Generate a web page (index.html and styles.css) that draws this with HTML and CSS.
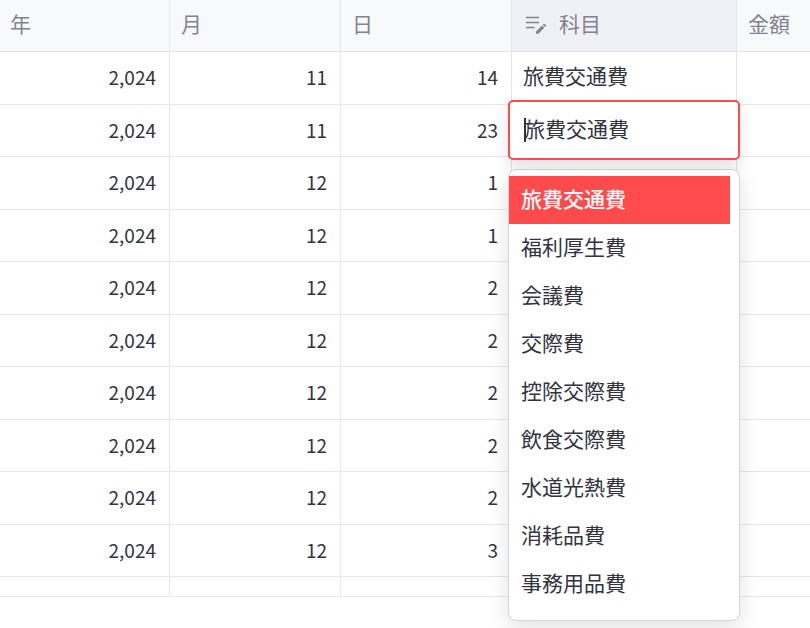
FILE: index.html
```html
<!DOCTYPE html>
<html lang="ja">
<head>
<meta charset="utf-8">
<meta name="viewport" content="width=device-width, initial-scale=1">
<title>経費</title>
<link rel="stylesheet" href="styles.css">
</head>
<body>
<table class="grid">
  <colgroup>
    <col class="col-year"><col class="col-day"><col class="col-day"><col class="col-subject"><col>
  </colgroup>
  <thead>
    <tr>
      <th scope="col">年</th>
      <th scope="col">月</th>
      <th scope="col">日</th>
      <th scope="col" class="active">
        <span class="heading">
          <svg class="edit-icon" viewBox="0 0 22 20" aria-hidden="true">
            <path d="M1 2.5h13M1 7.5h13M1 12.5h8.5" fill="none" stroke="currentColor" stroke-width="1.7"/>
            <path d="M11 18.8v-2.3l6-6 2.3 2.3-6 6zM17.7 9.8l.9-.9q.5-.5 1 0l1.3 1.3q.5.5 0 1l-.9.9z" fill="currentColor"/>
          </svg>
          科目
        </span>
      </th>
      <th scope="col">金額</th>
    </tr>
  </thead>
  <tbody>
    <tr><td class="num">2,024</td><td class="num">11</td><td class="num">14</td><td>旅費交通費</td><td></td></tr>
    <tr>
      <td class="num">2,024</td><td class="num">11</td><td class="num">23</td>
      <td class="editing">
        <div class="editor">
          <div class="field">
            <input class="field-input" type="text" value="旅費交通費" aria-label="科目" role="combobox" aria-expanded="true" aria-controls="subjects">
            <span class="caret"></span>
          </div>
          <div class="menu" id="subjects" role="listbox" aria-label="科目">
            <button class="option selected" type="button" role="option" aria-selected="true">旅費交通費</button>
            <button class="option" type="button" role="option">福利厚生費</button>
            <button class="option" type="button" role="option">会議費</button>
            <button class="option" type="button" role="option">交際費</button>
            <button class="option" type="button" role="option">控除交際費</button>
            <button class="option" type="button" role="option">飲食交際費</button>
            <button class="option" type="button" role="option">水道光熱費</button>
            <button class="option" type="button" role="option">消耗品費</button>
            <button class="option" type="button" role="option">事務用品費</button>
          </div>
        </div>
      </td>
      <td></td>
    </tr>
    <tr><td class="num">2,024</td><td class="num">12</td><td class="num">1</td><td></td><td></td></tr>
    <tr><td class="num">2,024</td><td class="num">12</td><td class="num">1</td><td></td><td></td></tr>
    <tr><td class="num">2,024</td><td class="num">12</td><td class="num">2</td><td></td><td></td></tr>
    <tr><td class="num">2,024</td><td class="num">12</td><td class="num">2</td><td></td><td></td></tr>
    <tr><td class="num">2,024</td><td class="num">12</td><td class="num">2</td><td></td><td></td></tr>
    <tr><td class="num">2,024</td><td class="num">12</td><td class="num">2</td><td></td><td></td></tr>
    <tr><td class="num">2,024</td><td class="num">12</td><td class="num">2</td><td></td><td></td></tr>
    <tr><td class="num">2,024</td><td class="num">12</td><td class="num">3</td><td></td><td></td></tr>
    <tr class="partial"><td></td><td></td><td></td><td></td><td></td></tr>
  </tbody>
</table>
</body>
</html>
```

FILE: styles.css
```css
* {
  box-sizing: border-box;
}

body {
  min-height: 100vh;
  margin: 0;
  background: #fff;
  color: #31333f;
  font-family: "Noto Sans CJK JP", sans-serif;
  font-size: 21px;
  line-height: 32px;
}

.grid {
  width: 100%;
  table-layout: fixed;
  border-collapse: separate;
  border-spacing: 0;
}

.col-year {
  width: 170px;
}

.col-day {
  width: 171px;
}

.col-subject {
  width: 225px;
}

th,
td {
  height: 52px;
  padding: 0 11px 6px;
  border-right: 1px solid #e6e7e9;
  border-bottom: 1px solid #e6e7e9;
  text-align: left;
  font-weight: 400;
  white-space: nowrap;
}

tbody tr:nth-child(odd) td {
  height: 53px;
}

th {
  background: #f8f9fb;
  border-bottom-color: #dfe1e4;
  color: #808390;
}

th:first-child {
  padding-left: 10px;
}

th:last-child,
td:last-child {
  border-right: 0;
}

th.active {
  background: #f0f1f6;
}

.num {
  padding: 0 13px 2px;
  font-size: 19px;
  text-align: right;
}

tbody tr.partial td {
  height: 20px;
  padding: 0;
}

.heading {
  display: flex;
  align-items: center;
  gap: 12px;
}

.edit-icon {
  width: 22px;
  height: 20px;
  margin-top: 4px;
  margin-left: 2px;
}

.editing {
  position: relative;
}

.editor {
  position: absolute;
  z-index: 1;
  top: -5px;
  left: -4px;
  right: -4px;
}

.field {
  position: relative;
  height: 60px;
  border: 2px solid #ff4b4b;
  border-radius: 5px;
  background: #fff;
  box-shadow: 0 6px 14px rgba(62, 65, 86, 0.14);
}

.field-input {
  width: 100%;
  height: 100%;
  padding: 0 14px 4px;
  border: 0;
  outline: 0;
  background: transparent;
  color: inherit;
  font: inherit;
}

.caret {
  position: absolute;
  top: 16px;
  left: 14px;
  width: 2px;
  height: 24px;
  background: #31333f;
}

.menu {
  margin-top: 9px;
  padding: 6px 9px 12px 0;
  border: 1px solid #d5d6d9;
  border-radius: 8px;
  background: #fff;
  box-shadow: 0 6px 20px rgba(0, 0, 0, 0.12);
}

.option {
  display: block;
  width: 100%;
  height: 48px;
  padding: 0 12px 4px;
  border: 0;
  background: transparent;
  color: inherit;
  font: inherit;
  text-align: left;
}

.option.selected {
  background: #ff4b4b;
  color: #fff;
  font-weight: 500;
}
```
